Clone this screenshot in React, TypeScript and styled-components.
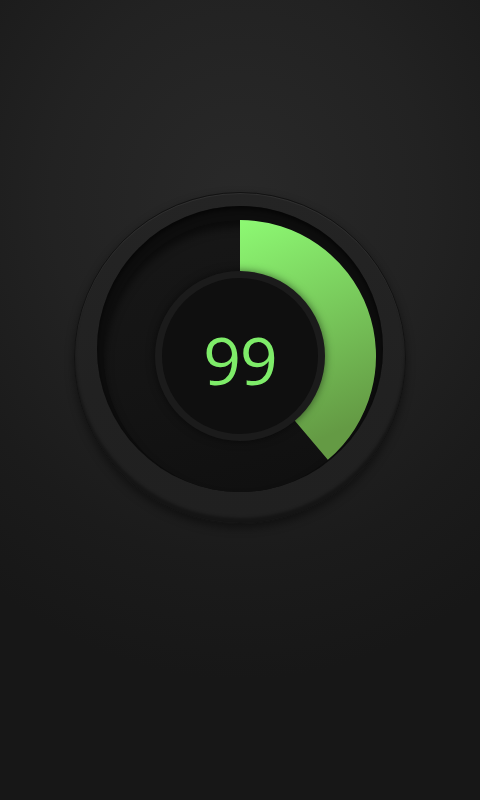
import * as React from 'react';
import styled, { createGlobalStyle } from 'styled-components';

const GlobalStyle = createGlobalStyle`
    html, body {
        margin: 0;
        padding: 0;
        background: #1a1a1a;
    }
`;

const Page = styled.main`
    min-height: 800px;
    box-sizing: border-box;
    padding-top: 192px;
    display: flex;
    justify-content: center;
    align-items: flex-start;
    background: radial-gradient(ellipse 420px 480px at 240px 200px, #292929 0%, #222 45%, #1b1b1b 75%, #171717 100%);
`;

const Ring = styled.div`
    width: 332px;
    height: 332px;
    box-sizing: border-box;
    border-radius: 50%;
    border: 1px solid #121212;
    background: linear-gradient(180deg, #242424 0%, #212121 60%, #202020 100%);
    box-shadow: inset 0 -5px 3px rgba(0, 0, 0, 0.35), inset 0 1px 1px rgba(255, 255, 255, 0.06),
        0 4px 10px rgba(0, 0, 0, 0.45);
    display: flex;
    justify-content: center;
    padding-top: 13px;
`;

const Well = styled.div`
    width: 286px;
    height: 286px;
    box-sizing: border-box;
    border-radius: 50%;
    background: #0d0d0d;
    box-shadow: inset 0 3px 5px rgba(0, 0, 0, 0.6);
    display: flex;
    justify-content: center;
    padding-top: 14px;
`;

const Track = styled.div`
    position: relative;
    width: 272px;
    height: 272px;
    border-radius: 50%;
    background: linear-gradient(165deg, #171717 0%, #141414 50%, #0f0f0f 100%);
    box-shadow: inset 0 7px 8px rgba(0, 0, 0, 0.55);
    display: grid;
    place-items: center;
`;

const Arc = styled.svg`
    position: absolute;
    inset: 0;
    width: 272px;
    height: 272px;
`;

const Disc = styled.div`
    position: relative;
    width: 170px;
    height: 170px;
    box-sizing: border-box;
    border-radius: 50%;
    border: 7px solid #1b1b1b;
    background: #0f0f0f;
    box-shadow: 0 0 8px rgba(0, 0, 0, 0.55);
    display: flex;
    align-items: center;
    justify-content: center;
`;

const Value = styled.span`
    font-family: 'Open Sans', 'DejaVu Sans', sans-serif;
    font-size: 66px;
    font-weight: 400;
    line-height: 1;
    padding-top: 5px;
    color: #7eec69;
    letter-spacing: -1px;
`;

const SIZE = 272;
const OUTER = 136;
const INNER = 80;

function arcPath(fraction: number) {
    const c = SIZE / 2;
    const angle = fraction * 2 * Math.PI;
    const large = fraction > 0.5 ? 1 : 0;
    const ox = c + OUTER * Math.sin(angle);
    const oy = c - OUTER * Math.cos(angle);
    const ix = c + INNER * Math.sin(angle);
    const iy = c - INNER * Math.cos(angle);
    return [
        `M ${c} ${c - OUTER}`,
        `A ${OUTER} ${OUTER} 0 ${large} 1 ${ox} ${oy}`,
        `L ${ix} ${iy}`,
        `A ${INNER} ${INNER} 0 ${large} 0 ${c} ${c - INNER}`,
        'Z',
    ].join(' ');
}

interface GaugeProps {
    value: number;
    max: number;
}

function Gauge(props: GaugeProps) {
    return (
        <Ring>
            <Well>
                <Track>
                    <Arc viewBox={`0 0 ${SIZE} ${SIZE}`}>
                        <defs>
                            <linearGradient id="gronn" x1="0" y1="0" x2="0.25" y2="1">
                                <stop offset="0" stopColor="#8df973" />
                                <stop offset="1" stopColor="#649a44" />
                            </linearGradient>
                        </defs>
                        <path d={arcPath(props.value / props.max)} fill="url(#gronn)" />
                    </Arc>
                    <Disc>
                        <Value>{props.value}</Value>
                    </Disc>
                </Track>
            </Well>
        </Ring>
    );
}

export default function App() {
    return (
        <>
            <GlobalStyle />
            <Page>
                <Gauge value={99} max={255} />
            </Page>
        </>
    );
}
